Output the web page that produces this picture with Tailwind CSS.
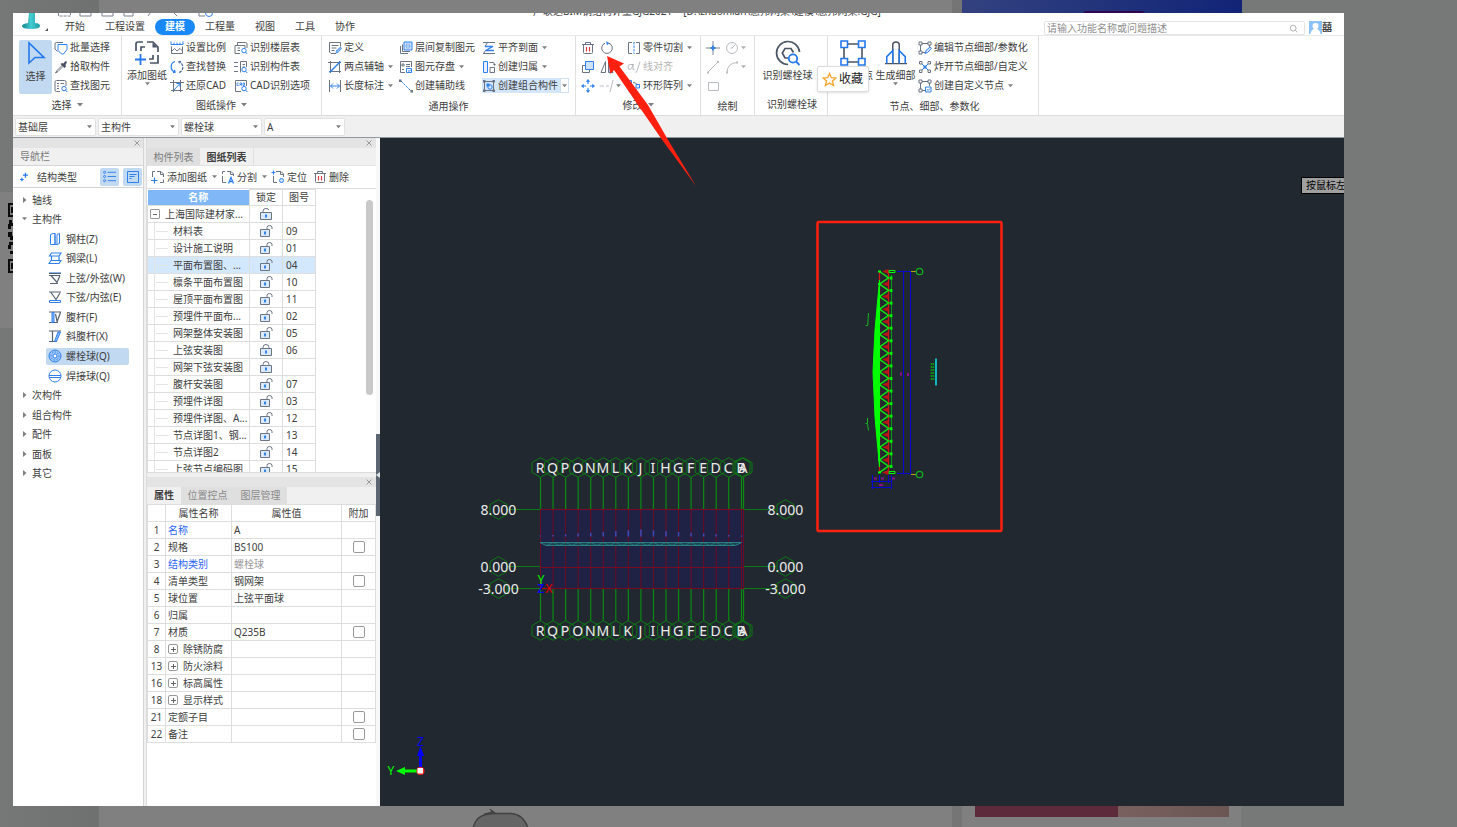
<!DOCTYPE html>
<html lang="zh-CN">
<head>
<meta charset="utf-8">
<meta name="viewport" content="width=device-width, initial-scale=1">
<title>广联达BIM钢结构计量GJG2021</title>
<script src="https://cdn.jsdelivr.net/npm/@tailwindcss/browser@4"></script>
</head>
<body class="relative h-screen overflow-hidden bg-[#777978] font-['Noto_Sans','Noto_Sans_CJK_SC',sans-serif] text-[10px] leading-[16px] text-[#404040]">

<!-- Icon library -->
<svg class="hidden" aria-hidden="true">
  <defs>
    <g id="lens"><circle cx="10" cy="9.6" r="2.2" fill="#fff" stroke="#2f80ed"/><path d="M11.6 11.2 13.3 13" stroke="#2f80ed"/></g>
    <g id="nodes" fill="none" stroke="#6b7482"><path d="M4 2.500h6M2.500 4v6M4 11.500h3M11.500 4v3"/><path d="M1 1h3v3H1zM10 1h3v3h-3zM1 10h3v3H1z" fill="#fff"/></g>
  </defs>
  <symbol id="i-cursor" viewBox="0 0 24 26"><path d="M5 2v20l6-5.500h9z" fill="none" stroke="#2378ea" stroke-width="1.600"/></symbol>
  <symbol id="i-batch" viewBox="0 0 14 14"><path d="M1 8V3Q1 1.500 2.500 1.500H9M1 8l2.500 2.500" fill="none" stroke="#6b7482"/><path d="M4 3.500h9v5L9.500 13H7.500L4 9.500z" fill="#fff" stroke="#2f80ed"/></symbol>
  <symbol id="i-pick" viewBox="0 0 14 14"><path d="M8.500 5 3 10.500 1.500 13 4 11.500l5.500-5.500" fill="none" stroke="#6b7482"/><path d="m8 3 1.500.5L11 1.500q1.500-.8 2 .5L11.500 5l.5 1.500L10.500 8 6.500 4z" fill="#465060"/></symbol>
  <symbol id="i-find" viewBox="0 0 14 14"><path d="M6 12.500H2.500Q1 12.500 1 11V3q0-1.500 1.500-1.500h8Q12 1.500 12 3v4M3 4.500h2M6.500 4.500H10M3 7h2M3 9.500h2" fill="none" stroke="#6b7482"/><use href="#lens"/></symbol>
  <symbol id="i-addsheet" viewBox="0 0 26 26"><path d="M2 11V4q0-2 2-2h5M13 2h6l5 5v5M24 15v8h-8M7 11V7h4M19 15v4h-4" fill="none" stroke="#4b5565" stroke-width="1.700"/><path d="M18.500 2.500v5h5z" fill="#4b5565"/><path d="M1 19.500h11M6.500 14v11" stroke="#2378ea" stroke-width="1.800"/></symbol>
  <symbol id="i-scale" viewBox="0 0 14 14"><path d="M1 .5v3h12v-3M4 1.500v2M7 1.500v2M10 1.500v2" fill="none" stroke="#2f80ed"/><path d="M1.500 5.500v7h11v-7M2 10l2.500-2.500L7 10l3-2.500 2.500 2.500" fill="none" stroke="#6b7482"/></symbol>
  <symbol id="i-replace" viewBox="0 0 14 14"><path d="M5 1.500C0 3 0 10 4.500 12M3 12.500l2-.3-.5-2.200" fill="none" stroke="#2f80ed" stroke-width="1.300"/><path d="M9 12.500c5-1.500 5-8.500.5-10.500M11 1.500l-2 .3.500 2.200" fill="none" stroke="#4a6fa8" stroke-width="1.300" stroke-dasharray="3 1"/></symbol>
  <symbol id="i-restore" viewBox="0 0 14 14"><path d="M0 3.500h14M3.500 1v12M10.500 1v12M1 11.500h12" stroke="#6b7482"/><path d="M3.500 11.500 10 4.500M6.500 4.500H10V8" fill="none" stroke="#2f80ed"/></symbol>
  <symbol id="i-floors" viewBox="0 0 14 14"><path d="M3.500 4V1.500h8q1.500 0 1.500 1.500v4M6 12.500H1V4.500h10V7M3.500 7H6M3.500 9.500H6" fill="none" stroke="#6b7482"/><use href="#lens"/></symbol>
  <symbol id="i-comps" viewBox="0 0 14 14"><path d="M0 2.500h4M0 6.500h4M0 11.500h4M6.500 12.500v-11h6V7M8.500 4.500H11M8.500 7H11" fill="none" stroke="#6b7482"/><use href="#lens"/></symbol>
  <symbol id="i-cad" viewBox="0 0 14 14"><path d="M7 12.500H1.500v-11h11V7" fill="none" stroke="#6b7482"/><path d="M4.800 4H3v2.500h1.800M6 6.700V4h1.500v2.700M6 5.500h1.500M9 4v2.500h1.500V4z" fill="none" stroke="#2f80ed" stroke-width=".8"/><use href="#lens"/></symbol>
  <symbol id="i-define" viewBox="0 0 14 14"><path d="M8 12.500H3l-1.500-1.500v-9.500h11v4M3.500 4.500h7M3.500 7h5M3.500 9.500h3" fill="none" stroke="#6b7482"/><path d="m8 12 .5-2.500L12.500 6l1 1.500L10 11.500z" fill="#8bb8f2" stroke="#2f80ed" stroke-width=".7"/></symbol>
  <symbol id="i-axis" viewBox="0 0 14 14"><path d="M2.500 1v12M11.500 1v12M0 2.500h13M1 11.500h12" stroke="#6b7482"/><path d="m1.500 12.500 11-11" stroke="#2f80ed" stroke-width="1.500"/></symbol>
  <symbol id="i-length" viewBox="0 0 14 14"><path d="M1.500 1v12M12.500 1v12" stroke="#6b7482"/><path d="M2.500 7h9M5 4.500 2.500 7 5 9.500M9 4.500 11.500 7 9 9.500" fill="none" stroke="#2f80ed"/></symbol>
  <symbol id="i-copylayer" viewBox="0 0 14 14"><path d="M1.500 5v7.500H9M3.500 3.500v7H11" fill="none" stroke="#6b7482"/><path d="M5 1h8v8H5z" fill="#cfe2fb" stroke="#2f80ed"/><path d="M7.500 3h3v4h-3zM5 5h8" fill="none" stroke="#8bb8f2"/></symbol>
  <symbol id="i-store" viewBox="0 0 14 14"><path d="M6 12.500H1.500v-11h11V7M3 4h2v2H3zM7 4.500h4M7 6.500h4M3 9.500h2" fill="none" stroke="#6b7482"/><path d="M7.500 8.500h5v4h-5zM9 10.500l1.200 1L12 9.500" fill="#fff" stroke="#2f80ed"/></symbol>
  <symbol id="i-aux" viewBox="0 0 14 14"><path d="m2 2 10 10" stroke="#2f80ed" stroke-dasharray="2.500 1"/><path d="M0 .5h2.500V3H0zM11.500 11H14v2.500h-2.500z" fill="#6b7482"/></symbol>
  <symbol id="i-flush" viewBox="0 0 14 14"><path d="M1 1.500h12M1 12.500h12M5.500 1.500 3 5.500M3.500 9.500l-2 3" fill="none" stroke="#6b7482"/><path d="M3 5.500h8L3.500 9.500H12" fill="none" stroke="#2f80ed" stroke-width="1.300"/></symbol>
  <symbol id="i-belong" viewBox="0 0 14 14"><path d="M1.500 1.500h4v11h-4z" fill="#e6f0fd" stroke="#2f80ed"/><path d="M8 7.500h4.500v5H8zM7.500 2.500H11q1.500 0 1.500 2.500" fill="none" stroke="#6b7482"/><path d="m11 4 1.500 2L14 4z" fill="#6b7482"/></symbol>
  <symbol id="i-combo" viewBox="0 0 14 14"><path d="M2.500 2.500h9v9h-9z" fill="none" stroke="#6b7482"/><path d="M1 1h2.500v2.500H1zM10.500 1H13v2.500h-2.500zM1 10.500h2.500V13H1zM10.500 10.500H13V13h-2.500z" fill="#6b7482"/><path d="M4.500 4.500h3v3h-3z" fill="#2f80ed"/><circle cx="8" cy="8" r="2.200" fill="none" stroke="#2f80ed"/></symbol>
  <symbol id="i-trash" viewBox="0 0 14 14"><path d="M1 3.500h12M4.500 3V1.500h5V3M2.500 3.500v8q0 1 1 1h7q1 0 1-1v-8" fill="none" stroke="#6b7482"/><path d="M5.500 6v4.500M8.500 6v4.500" stroke="#e0393e" stroke-width="1.200"/></symbol>
  <symbol id="i-rotate" viewBox="0 0 14 14"><path d="M9 2.200a5.300 5.300 0 1 1-4 0" fill="none" stroke="#6b7482"/><path d="m6 0 3.500 2.200L7 4.200z" fill="#2f80ed"/></symbol>
  <symbol id="i-cut" viewBox="0 0 14 14"><path d="M5 1.500H1.500v11H5M9 1.500h3.500v11H9" fill="none" stroke="#6b7482"/><path d="M7 1v12" stroke="#2f80ed" stroke-dasharray="2.500 1"/></symbol>
  <symbol id="i-copy" viewBox="0 0 14 14"><path d="M4.500 5.500h-3v7h7v-3" fill="none" stroke="#6b7482"/><path d="M4.500 1.500h8v8h-8z" fill="#cfe2fb" stroke="#2f80ed"/></symbol>
  <symbol id="i-mirror" viewBox="0 0 14 14"><path d="M5.500 1.500v11H1z" fill="none" stroke="#6b7482"/><path d="M8.500 1.500v11H13z" fill="#a9c9f5" stroke="#6b7482"/></symbol>
  <symbol id="i-align" viewBox="0 0 14 14"><path d="M7 4.500H3Q1 4.500 1 7t2 2.500q2 0 3-5v5h1.500M9.500 12.500l3.500-11M8 11.500v1" fill="none" stroke="#b8bcc2"/></symbol>
  <symbol id="i-move" viewBox="0 0 14 14"><path d="M7 2v3M7 9v3M2 7h3M9 7h3" stroke="#2f80ed" stroke-width="1.200"/><path d="M7 0 9.200 2.800H4.800zM7 14l2.200-2.800H4.800zM0 7l2.800-2.200v4.400zM14 7l-2.800-2.200v4.400z" fill="#2f80ed"/></symbol>
  <symbol id="i-extend" viewBox="0 0 14 14"><path d="M0 7h4M6 7h3M10 13l3-12" stroke="#b8bcc2"/></symbol>
  <symbol id="i-array" viewBox="0 0 14 14"><path d="M1 1.500h3.500V5H1zM9 5.500h3.500V9H9zM2 9h3.500v3.500H2z" fill="#e6f0fd" stroke="#2f80ed"/><path d="M6 3.500q3 0 4 2M9.500 10q-1 2-3.500 1.500" fill="none" stroke="#6b7482"/></symbol>
  <symbol id="i-point" viewBox="0 0 14 14"><path d="M0 7h5M9 7h5M7 0v5M7 9v5" stroke="#7c8794"/><path d="M4.500 7h5M7 4.500v5" stroke="#2f80ed" stroke-width="1.800"/></symbol>
  <symbol id="i-circle" viewBox="0 0 14 14"><circle cx="7" cy="7" r="5.500" fill="none" stroke="#b8bcc2"/><path d="m7 7 3.500-3.500M5.500 7h2" stroke="#b8bcc2"/></symbol>
  <symbol id="i-line" viewBox="0 0 14 14"><path d="m2 12 10-10" stroke="#b8bcc2"/><path d="M1 11.500h2v2H1zM11 1h2v2h-2z" fill="#b8bcc2"/></symbol>
  <symbol id="i-arc" viewBox="0 0 14 14"><path d="M2 13Q2 3 12 2.500" fill="none" stroke="#b8bcc2"/><path d="M1 11.500h2v2H1zM11 1.500h2v2h-2z" fill="#b8bcc2"/></symbol>
  <symbol id="i-rect" viewBox="0 0 14 14"><path d="M2.500 3.500h10v8h-10z" fill="none" stroke="#b8bcc2"/></symbol>
  <symbol id="i-bolt" viewBox="0 0 26 26"><path d="M13 24.500A11.500 11.500 0 1 1 24.500 12" fill="none" stroke="#4b5565" stroke-width="1.700"/><path d="M13 18h-3l-2.700-5L10 8.500h6l2.500 4" fill="none" stroke="#4b5565" stroke-width="1.700"/><circle cx="18" cy="18.500" r="4.200" fill="#fff" stroke="#2378ea" stroke-width="1.800"/><path d="m21 21.500 3.500 3.500" stroke="#2378ea" stroke-width="1.800"/></symbol>
  <symbol id="i-node" viewBox="0 0 26 26"><path d="M4 4h18v18H4z" fill="none" stroke="#4b5565" stroke-width="1.600"/><path d="M1 1h6.500v6.500H1zM18.500 1H25v6.500h-6.500zM1 18.500h6.500V25H1zM18.500 18.500H25V25h-6.500z" fill="#fff" stroke="#2378ea" stroke-width="1.600"/></symbol>
  <symbol id="i-detail" viewBox="0 0 26 26"><path d="M9.500 24V4q0-3 3.500-3t3.500 3v20M1 24.500h24" fill="none" stroke="#4b5565" stroke-width="1.600"/><path d="M3 24v-7l6.500-6.500V24M23 24v-7l-6.500-6.500V24" fill="none" stroke="#2378ea" stroke-width="1.700"/></symbol>
  <symbol id="i-nedit" viewBox="0 0 14 14"><use href="#nodes"/><path d="m7 12.500 1-3L12 6l1.500 1.500-4 4z" fill="#cfe2fb" stroke="#2f80ed"/></symbol>
  <symbol id="i-nexplode" viewBox="0 0 14 14"><path d="M1.500 4V1.500H4V4zM10 1.500h2.500V4H10zM1.500 10H4v2.500H1.500zM10 10h2.500v2.500H10z" fill="none" stroke="#6b7482"/><path d="m4 4 6 6M10 4l-6 6" stroke="#2f80ed"/><path d="M5.500 5.500h3v3h-3z" fill="#2f80ed"/></symbol>
  <symbol id="i-ncustom" viewBox="0 0 14 14"><use href="#nodes"/><path d="M7.500 8H13v5H7.500zM9 10.500l1.200 1L12 9.500" fill="#fff" stroke="#2f80ed"/></symbol>
  <symbol id="i-search" viewBox="0 0 14 14"><circle cx="6.500" cy="6.500" r="4.500" fill="none" stroke="#8c8c8c"/><path d="m10 10 3 3" stroke="#8c8c8c"/></symbol>
  <symbol id="i-spark" viewBox="0 0 14 14"><path d="M9 1v7M5.500 4.500h7M4 8v5M1.500 10.500h5" stroke="#2378ea" stroke-width="1.700"/></symbol>
  <symbol id="i-list" viewBox="0 0 14 14"><path d="M5 2.500h9M5 7h9M5 11.500h9" stroke="#2f80ed"/><g fill="none" stroke="#2f80ed"><circle cx="1.700" cy="2.500" r="1.100"/><circle cx="1.700" cy="7" r="1.100"/><circle cx="1.700" cy="11.500" r="1.100"/></g></symbol>
  <symbol id="i-doc" viewBox="0 0 14 14"><path d="M1.500 1.500h11v11h-11zM3.500 4.500h7M3.500 6.500h5M3.500 8.500h2" fill="none" stroke="#2f80ed"/></symbol>
  <symbol id="i-col" viewBox="0 0 14 14"><path d="M2.500 2.500 5 1.500h2v11H2.500zM7 1.500v11h2l2.500-1v-10L9 2.500v10" fill="none" stroke="#2f80ed"/></symbol>
  <symbol id="i-beam" viewBox="0 0 14 14"><path d="M3.500 2H13l-2 3H1.500zM3.500 5v4.500M11 5v4.500M3 9.500h10l-2 3H1z" fill="none" stroke="#2f80ed" stroke-width="1.200"/></symbol>
  <symbol id="i-top" viewBox="0 0 14 14"><path d="M1 2.500h12M1 4.500h11M3 4.500l6 7 3-7M2 12.500h8" fill="none" stroke="#56606f" stroke-width="1.200"/><path d="M1 1.500h12" stroke="#8bb8f2"/></symbol>
  <symbol id="i-bottom" viewBox="0 0 14 14"><path d="M1 2h12M3 2.500l5 7L12 3" fill="none" stroke="#56606f" stroke-width="1.200"/><path d="M1.500 10.500h11v2h-11z" fill="#fff" stroke="#2f80ed"/></symbol>
  <symbol id="i-web" viewBox="0 0 14 14"><path d="M1 2h12M1 12.500h9M12.500 2.500 9 12M7.500 4 9 11" fill="none" stroke="#56606f" stroke-width="1.200"/><path d="M4 2.500h2v10H4z" fill="#8bb8f2" stroke="#2f80ed"/></symbol>
  <symbol id="i-diag" viewBox="0 0 14 14"><path d="M1 2h12M1 12.500h8M4.500 2.500v10" fill="none" stroke="#56606f" stroke-width="1.200"/><path d="m12.500 3-4 9.500H6.500L10 3z" fill="#8bb8f2" stroke="#2f80ed"/></symbol>
  <symbol id="i-bball" viewBox="0 0 14 14"><circle cx="7" cy="7" r="6" fill="#9cc3f7" stroke="#2f80ed"/><circle cx="7" cy="7" r="4" fill="none" stroke="#2f80ed" stroke-dasharray="1.500 1.500"/><circle cx="7" cy="7" r="2" fill="#fff" stroke="#2f80ed"/></symbol>
  <symbol id="i-wball" viewBox="0 0 14 14"><circle cx="7" cy="7" r="6" fill="none" stroke="#2f80ed"/><path d="M1 6.500h12M1 8.500h12" stroke="#2f80ed"/></symbol>
  <symbol id="i-sheet" viewBox="0 0 14 14"><path d="M1.500 7V1.500H4M6 1.500h4L12.500 4v3M12.500 9.500v3H9M9.500 1.500v3h3" fill="none" stroke="#6b7482"/><path d="M0 10.500h6.500M3.500 7.500v6" stroke="#2f80ed" stroke-width="1.200"/></symbol>
  <symbol id="i-split" viewBox="0 0 14 14"><path d="M1.500 4V1.500H4M6 1.500h4L12.500 4v2M1.500 6v6.500H5M9.500 1.500v3h3" fill="none" stroke="#6b7482"/><path d="m7.500 13.500 2.500-6 2.500 6M8.500 11.500h3" fill="none" stroke="#2f80ed" stroke-width="1.300"/></symbol>
  <symbol id="i-locate" viewBox="0 0 14 14"><path d="M5 1.500h5L12.500 4v3M2.500 6v6.500H6M9.500 1.500v3h3" fill="none" stroke="#6b7482"/><path d="M.5 2.500h4M2.500.5v4" stroke="#2f80ed"/><circle cx="10.500" cy="10.500" r="2" fill="#cfe2fb" stroke="#2f80ed"/></symbol>
  <symbol id="i-open" viewBox="0 0 14 14"><path d="M1.500 5.500h9v7h-9z" fill="#dbe9fd" stroke="#6b7482"/><path d="M8 5V3.500Q8 1.500 10.500 1.500t2.500 2V5" fill="none" stroke="#6b7482"/><path d="M6 7.500v3" stroke="#2378ea" stroke-width="1.800"/></symbol>
  <symbol id="i-openc" viewBox="0 0 14 14"><path d="M1.500 5.500h11v7h-11z" fill="#dbe9fd" stroke="#6b7482"/><path d="M4 5.500V4Q4 1.500 7 1.500q2.500 0 3 1.500" fill="none" stroke="#6b7482"/><path d="M7 7.500v3" stroke="#2378ea" stroke-width="1.800"/></symbol>
  <symbol id="i-lock" viewBox="0 0 14 14"><path d="M1.500 5.500h11v7h-11z" fill="#dbe9fd" stroke="#6b7482"/><path d="M4 5.500V4.500Q4 1.500 7 1.500t3 3v1" fill="none" stroke="#6b7482"/><path d="M7 7.500v3" stroke="#2378ea" stroke-width="1.800"/></symbol>
  <symbol id="i-down" viewBox="0 0 6 4"><path d="M0 0h6L3 3.500z" fill="#808080"/></symbol>
  <symbol id="i-right" viewBox="0 0 4 6"><path d="M0 0v6l3.500-3z" fill="#808080"/></symbol>
  <symbol id="i-x" viewBox="0 0 8 8"><path d="m1.500 1.500 5 5M6.500 1.500l-5 5" stroke="#9a9a9a"/></symbol>
</svg>

<!-- Dimmed page behind the viewer -->
<div class="absolute inset-0" aria-hidden="true">
  <div class="absolute inset-y-0 left-0 w-[99px] bg-linear-to-r from-[#757877] to-[#6f7170]"></div>
  <div class="absolute inset-y-0 left-[99px] w-[853px] bg-[#808080]"></div>
  <div class="absolute inset-y-0 left-[952px] w-[10px] bg-[#757575]"></div>
  <div class="absolute left-[962px] top-0 h-[100px] w-[280px] bg-linear-to-r from-[#33417f] to-[#122377]"></div>
  <div class="absolute left-[1082px] top-[11px] h-[10px] w-[64px] rounded-full bg-[#30064e]"></div>
  <div class="absolute bottom-0 left-[962px] h-[100px] w-[279px] bg-[#808080]"></div>
  <div class="absolute bottom-[10px] left-[975px] h-[40px] w-[143px] bg-[#5c2a3b]"></div>
  <div class="absolute bottom-[10px] left-[1118px] h-[40px] w-[111px] bg-linear-to-r from-[#78605e] to-[#6b5654]"></div>
  <div class="absolute left-0 top-[192px] h-[136px] w-[13px] bg-[#808080]"></div>
  <svg class="absolute left-[8px] top-[203px]" width="6" height="70" viewBox="0 0 6 70"><path d="M0 0h6v2H2v10h4v2H0zM3 4h3v6H3zM1 17h3v3h2v3H3v3H0v-5h1zM0 29h4v4h2v4H2v-3H0zM1 39h5v3H3v4H0v-4h1zM2 48h3v3H2zM0 56h6v2H2v10h4v2H0zM3 60h3v6H3z" fill="#0c0c0c"/></svg>
  <svg class="absolute left-[472px] top-[808px]" width="58" height="19" viewBox="0 0 58 19"><path d="M1 20C4 9 10 5.500 25 5.500h14C47 6 53 11 56 20z" fill="#656565" stroke="#424242" stroke-width="1.500"/><path d="M12 6 20 4 18 1l6 4.500" fill="#424242" stroke="#424242"/></svg>
</div>

<div class="relative h-full pb-[21px] pl-[13px] pr-[113px] pt-[13px]">
<main class="relative flex h-full flex-col overflow-hidden bg-white">

  <!-- Title and menu -->
  <header class="relative shrink-0 border-b border-[#e9e9e9]">
    <div class="flex h-[4px] items-end gap-[10px] overflow-hidden pl-[45px] leading-[12px]">
      <svg class="shrink-0" width="160" height="13" viewBox="0 0 160 13" fill="none" stroke="#7c8490"><path d="M.500 1v11h12V1" stroke-dasharray="3 1"/><path d="M22 1v11h11V1M44 1v11h11V1H44M64 8h13M66 8v4h9V8M90 12l3-4M116 9l3 3M141 1v11h6"/><circle cx="151" cy="9" r="3.500" stroke="#2f80ed"/></svg>
      <h1 class="ml-[305px] whitespace-nowrap">广联达BIM钢结构计量GJG2021 - &nbsp;[D:\zhaomian\惠邦网架\建模\惠邦网架.GJG]</h1>
    </div>
    <svg class="absolute left-[9px] top-0" width="26" height="19" viewBox="0 0 26 19"><defs><linearGradient id="lg"><stop stop-color="#12848c"/><stop offset=".5" stop-color="#45cdd2"/><stop offset="1" stop-color="#1a9aa2"/></linearGradient></defs><path d="M7 0h6v10q5 0 5 3 0 3-9 3t-9-3q0-2 6-3z" fill="url(#lg)"/><path d="M26 15v3h-3z" fill="#555"/></svg>
    <div class="flex h-[18px] items-end">
      <nav class="ml-[42px] flex h-[16px] leading-[15px] [&>a]:px-[10px]">
        <a href="#">开始</a><a href="#">工程设置</a><a href="#" class="rounded-full bg-[#1989fa] font-bold text-white">建模</a><a href="#">工程量</a><a href="#">视图</a><a href="#">工具</a><a href="#">协作</a>
      </nav>
      <form class="ml-auto flex h-[14px] w-[261px] items-center rounded-[2px] border border-[#e4e4e4] pl-[2px] pr-[6px]">
        <input type="search" aria-label="搜索功能" placeholder="请输入功能名称或问题描述" class="h-[12px] min-w-0 flex-1 leading-[12px] outline-none placeholder:text-[#8f8f8f]">
        <svg width="9" height="9"><use href="#i-search"/></svg>
      </form>
      <div class="ml-[4px] mr-[12px] flex h-[16px] items-center">
        <svg width="13" height="13" viewBox="0 0 13 13"><path d="M0 0h13v13H0z" fill="#8cc3fa"/><path d="M6.500 2q3 0 3 3 0 2-1.500 3 3 1 3.500 5h-10q.500-4 3.500-5-1.500-1-1.500-3 0-3 3-3" fill="#fff"/></svg>
        <span class="font-bold">囍</span>
      </div>
    </div>
  </header>

  <!-- Ribbon -->
  <section id="ribbon" class="flex h-[80px] shrink-0 whitespace-nowrap border-b border-[#dcdcdc] leading-[19px] [&>div]:flex [&>div]:shrink-0 [&>div]:flex-col [&>div]:border-r [&>div]:border-[#e0e0e0] [&>div]:pt-[2px] [&_.col]:flex [&_.col]:shrink-0 [&_.col]:flex-col [&_.col>button]:flex [&_.col>button]:h-[19px] [&_.col>button]:items-center [&_.col>button]:gap-[2px] [&_p]:flex [&_p]:items-center [&_p]:justify-center [&_p]:gap-[5px]">
    <div class="w-[109px]">
      <div class="flex h-[57px] pl-[6px]">
        <button class="mt-[2px] flex h-[54px] w-[33px] flex-col items-center rounded-[2px] bg-[#c2d9f2] leading-[14px]"><svg class="mb-[2px] mt-[1px]" width="24" height="26"><use href="#i-cursor"/></svg>选择</button>
        <div class="col ml-[2px]">
          <button><svg width="14" height="14"><use href="#i-batch"/></svg>批量选择</button>
          <button><svg width="14" height="14"><use href="#i-pick"/></svg>拾取构件</button>
          <button><svg width="14" height="14"><use href="#i-find"/></svg>查找图元</button>
        </div>
      </div>
      <p class="leading-[20px]">选择<svg width="6" height="4"><use href="#i-down"/></svg></p>
    </div>
    <div class="w-[200px]">
      <div class="flex h-[57px] pl-[4px]">
        <button class="mt-[2px] flex w-[42px] flex-col items-center leading-[14px]"><svg class="mb-[2px]" width="26" height="26"><use href="#i-addsheet"/></svg>添加图纸<svg width="5" height="4"><use href="#i-down"/></svg></button>
        <div class="col ml-[2px] w-[64px]">
          <button><svg width="14" height="14"><use href="#i-scale"/></svg>设置比例</button>
          <button><svg width="14" height="14"><use href="#i-replace"/></svg>查找替换</button>
          <button><svg width="14" height="14"><use href="#i-restore"/></svg>还原CAD</button>
        </div>
        <div class="col">
          <button><svg width="14" height="14"><use href="#i-floors"/></svg>识别楼层表</button>
          <button><svg width="14" height="14"><use href="#i-comps"/></svg>识别构件表</button>
          <button><svg width="14" height="14"><use href="#i-cad"/></svg>CAD识别选项</button>
        </div>
      </div>
      <p class="leading-[20px]">图纸操作<svg width="6" height="4"><use href="#i-down"/></svg></p>
    </div>
    <div class="w-[254px]">
      <div class="flex h-[57px] pl-[6px]">
        <div class="col w-[71px]">
          <button><svg width="14" height="14"><use href="#i-define"/></svg>定义</button>
          <button><svg width="14" height="14"><use href="#i-axis"/></svg>两点辅轴<svg class="ml-[2px]" width="5" height="4"><use href="#i-down"/></svg></button>
          <button><svg width="14" height="14"><use href="#i-length"/></svg>长度标注<svg class="ml-[2px]" width="5" height="4"><use href="#i-down"/></svg></button>
        </div>
        <div class="col w-[83px]">
          <button><svg width="14" height="14"><use href="#i-copylayer"/></svg>层间复制图元</button>
          <button><svg width="14" height="14"><use href="#i-store"/></svg>图元存盘<svg class="ml-[2px]" width="5" height="4"><use href="#i-down"/></svg></button>
          <button><svg width="14" height="14"><use href="#i-aux"/></svg>创建辅助线</button>
        </div>
        <div class="col">
          <button><svg width="14" height="14"><use href="#i-flush"/></svg>平齐到面<svg class="ml-[2px]" width="5" height="4"><use href="#i-down"/></svg></button>
          <button><svg width="14" height="14"><use href="#i-belong"/></svg>创建归属<svg class="ml-[2px]" width="5" height="4"><use href="#i-down"/></svg></button>
          <button><span class="flex h-[15px] items-center gap-[2px] bg-[#d3e6fc] pr-[2px]"><svg width="14" height="14"><use href="#i-combo"/></svg>创建组合构件</span><span class="-ml-[2px] flex h-[15px] w-[9px] items-center justify-center border border-[#cfe0f5]"><svg width="5" height="4"><use href="#i-down"/></svg></span></button>
        </div>
      </div>
      <p class="leading-[22px]">通用操作</p>
    </div>
    <div class="w-[125px]">
      <div class="flex h-[57px] pl-[5px]">
        <div class="col w-[19px]">
          <button aria-label="删除"><svg width="14" height="14"><use href="#i-trash"/></svg></button>
          <button aria-label="复制"><svg width="14" height="14"><use href="#i-copy"/></svg></button>
          <button aria-label="移动"><svg width="14" height="14"><use href="#i-move"/></svg></button>
        </div>
        <div class="col w-[27px]">
          <button aria-label="旋转"><svg width="14" height="14"><use href="#i-rotate"/></svg></button>
          <button aria-label="镜像"><svg width="14" height="14"><use href="#i-mirror"/></svg></button>
          <button aria-label="延伸"><svg width="14" height="14"><use href="#i-extend"/></svg><svg width="5" height="4"><use href="#i-down"/></svg></button>
        </div>
        <div class="col">
          <button><svg width="14" height="14"><use href="#i-cut"/></svg>零件切割<svg class="ml-[2px]" width="5" height="4"><use href="#i-down"/></svg></button>
          <button class="text-[#b4b4b4]" disabled><svg width="14" height="14"><use href="#i-align"/></svg>线对齐</button>
          <button><svg width="14" height="14"><use href="#i-array"/></svg>环形阵列<svg class="ml-[2px]" width="5" height="4"><use href="#i-down"/></svg></button>
        </div>
      </div>
      <p class="leading-[20px]">修改<svg width="6" height="4"><use href="#i-down"/></svg></p>
    </div>
    <div class="w-[54px]">
      <div class="flex h-[57px] pl-[5px]">
        <div class="col w-[19px]">
          <button aria-label="点"><svg width="14" height="14"><use href="#i-point"/></svg></button>
          <button aria-label="直线" disabled><svg width="14" height="14"><use href="#i-line"/></svg></button>
          <button aria-label="矩形" disabled><svg width="14" height="14"><use href="#i-rect"/></svg></button>
        </div>
        <div class="col">
          <button aria-label="圆" disabled><svg width="14" height="14"><use href="#i-circle"/></svg><svg class="opacity-60" width="5" height="4"><use href="#i-down"/></svg></button>
          <button aria-label="弧" disabled><svg width="14" height="14"><use href="#i-arc"/></svg><svg class="opacity-60" width="5" height="4"><use href="#i-down"/></svg></button>
        </div>
      </div>
      <p class="leading-[22px]">绘制</p>
    </div>
    <div class="w-[73px]">
      <div class="flex h-[57px] justify-center pr-[7px]">
        <button class="mt-[2px] flex flex-col items-center leading-[14px]"><svg class="mb-[2px]" width="26" height="26"><use href="#i-bolt"/></svg>识别螺栓球</button>
      </div>
      <p class="pl-[2px] leading-[22px]">识别螺栓球</p>
    </div>
    <div class="w-[211px]">
      <div class="flex h-[57px] pl-[4px]">
        <button class="mt-[2px] flex w-[42px] flex-col items-center leading-[14px]"><svg class="mb-[2px]" width="26" height="26"><use href="#i-node"/></svg>生成节点</button>
        <button class="mt-[2px] flex w-[43px] flex-col items-center leading-[14px]"><svg class="mb-[2px]" width="24" height="26"><use href="#i-detail"/></svg>生成细部<svg width="5" height="4"><use href="#i-down"/></svg></button>
        <div class="col ml-[1px]">
          <button><svg width="14" height="14"><use href="#i-nedit"/></svg>编辑节点细部/参数化</button>
          <button><svg width="14" height="14"><use href="#i-nexplode"/></svg>炸开节点细部/自定义</button>
          <button><svg width="14" height="14"><use href="#i-ncustom"/></svg>创建自定义节点<svg class="ml-[2px]" width="5" height="4"><use href="#i-down"/></svg></button>
        </div>
      </div>
      <p class="pl-[3px] leading-[22px]">节点、细部、参数化</p>
    </div>
  </section>

  <!-- Context selectors -->
  <div class="flex h-[22px] shrink-0 items-center gap-[2px] border-b border-[#8f989f] bg-[#f0f0f0] pl-[2px] [&>label]:relative [&>label]:w-[81px] [&_select]:h-[18px] [&_select]:w-full [&_select]:appearance-none [&_select]:rounded-[2px] [&_select]:border [&_select]:border-[#e2e2e2] [&_select]:bg-white [&_select]:px-[2px] [&_select]:leading-[16px] [&_svg]:absolute [&_svg]:right-[4px] [&_svg]:top-[7px]">
    <label><select aria-label="楼层"><option>基础层</option></select><svg width="5" height="4"><use href="#i-down"/></svg></label>
    <label><select aria-label="构件大类"><option>主构件</option></select><svg width="5" height="4"><use href="#i-down"/></svg></label>
    <label><select aria-label="构件类型"><option>螺栓球</option></select><svg width="5" height="4"><use href="#i-down"/></svg></label>
    <label><select aria-label="构件"><option>A</option></select><svg width="5" height="4"><use href="#i-down"/></svg></label>
  </div>

  <div class="flex min-h-0 flex-1 bg-[#f0f0f0]">
    <!-- Navigation -->
    <aside class="flex w-[131px] shrink-0 flex-col border-r border-[#d4d4d4] bg-white">
      <div class="flex h-[10px] items-center justify-end bg-[#e4e4e4] pr-[2px]"><button aria-label="关闭"><svg class="block" width="8" height="8"><use href="#i-x"/></svg></button></div>
      <h2 class="h-[17px] bg-[#f0f0f0] pl-[7px] text-[#7c7c7c]">导航栏</h2>
      <div class="flex h-[23px] items-center border-y border-[#d4d4d4] pl-[6px] pr-[1px]">
        <svg width="10" height="10"><use href="#i-spark"/></svg><span class="ml-[8px] flex-1">结构类型</span>
        <button aria-label="列表视图" class="mr-[4px] flex h-[18px] w-[19px] items-center justify-center rounded-[2px] bg-[#c2d9f2]"><svg width="13" height="13"><use href="#i-list"/></svg></button>
        <button aria-label="详情视图" class="flex h-[18px] w-[19px] items-center justify-center rounded-[2px] bg-[#c2d9f2]"><svg width="14" height="14"><use href="#i-doc"/></svg></button>
      </div>
      <ul id="tree" class="mt-[2px] grid h-[293px] auto-rows-fr"></ul>
    </aside>

    <!-- Drawings and properties -->
    <div class="ml-[2px] flex w-[230px] shrink-0 flex-col border-l border-[#dcdcdc]">
      <section class="flex h-[335px] flex-col border-b border-[#dcdcdc] bg-white">
        <div class="flex h-[10px] shrink-0 items-center justify-end bg-[#e4e4e4] pr-[3px]"><button aria-label="关闭"><svg class="block" width="8" height="8"><use href="#i-x"/></svg></button></div>
        <div class="flex h-[18px] shrink-0 border-b border-[#e2e2e2] bg-[#f0f0f0] leading-[18px]"><button class="w-[53px] bg-[#dfdfdf] text-[#7c7c7c]">构件列表</button><button class="w-[54px] border-r border-[#e0e0e0] bg-[#f0f0f0] font-bold">图纸列表</button></div>
        <div class="flex h-[22px] shrink-0 items-center gap-[4px] pl-[4px] [&>button]:flex [&>button]:items-center [&>button]:gap-[2px]">
          <button><svg width="14" height="14"><use href="#i-sheet"/></svg>添加图纸<svg class="ml-[3px]" width="5" height="4"><use href="#i-down"/></svg></button>
          <button><svg width="14" height="14"><use href="#i-split"/></svg>分割<svg class="ml-[3px]" width="5" height="4"><use href="#i-down"/></svg></button>
          <button><svg width="14" height="14"><use href="#i-locate"/></svg>定位</button>
          <button class="ml-[2px]"><svg width="14" height="14"><use href="#i-trash"/></svg>删除</button>
        </div>
        <div class="flex min-h-0 flex-1 justify-between overflow-hidden border-t border-[#dcdcdc] pr-[3px]">
          <table class="h-max w-[169px] table-fixed border-collapse [&_td]:h-[17px] [&_td]:border [&_td]:border-[#dedede] [&_td]:p-0 [&_td]:leading-[16px]">
            <colgroup><col class="w-[102px]"><col class="w-[33px]"><col class="w-[33px]"></colgroup>
            <thead><tr class="h-[16px] leading-[15px]"><th class="bg-[#7fb7f7] p-0 text-white">名称</th><th class="border border-[#dedede] p-0 font-normal">锁定</th><th class="border border-[#dedede] p-0 font-normal">图号</th></tr></thead>
            <tbody id="sheets"></tbody>
          </table>
          <div class="mt-[11px] h-[195px] w-[7px] rounded-full bg-[#c9c9c9]"></div>
        </div>
      </section>
      <section class="mt-[4px] flex flex-1 flex-col bg-white">
        <div class="flex h-[10px] shrink-0 items-center justify-end bg-[#e4e4e4] pr-[3px]"><button aria-label="关闭"><svg class="block" width="8" height="8"><use href="#i-x"/></svg></button></div>
        <div class="flex h-[17px] shrink-0 bg-[#f0f0f0] leading-[17px]"><button class="w-[34px] font-bold">属性</button><button class="w-[53px] bg-[#dfdfdf] text-[#8a8a8a]">位置控点</button><button class="w-[53px] bg-[#dfdfdf] text-[#8a8a8a]">图层管理</button></div>
        <table class="w-[228px] table-fixed border-collapse [&_td]:h-[17px] [&_td]:border [&_td]:border-[#dedede] [&_td]:py-0 [&_td]:leading-[16px] [&_th]:h-[17px] [&_th]:border [&_th]:border-[#dedede] [&_th]:p-0 [&_th]:font-normal [&_th]:leading-[16px]">
          <colgroup><col class="w-[18px]"><col class="w-[66px]"><col class="w-[110px]"><col class="w-[34px]"></colgroup>
          <thead><tr><th></th><th>属性名称</th><th>属性值</th><th>附加</th></tr></thead>
          <tbody id="props"></tbody>
        </table>
      </section>
    </div>

    <div class="w-[4px] shrink-0 bg-[#f8f8f8] pt-[296px]"><button aria-label="收起面板" class="flex h-[82px] w-[4px] items-center bg-[#5b6672]"><svg width="4" height="6" viewBox="0 0 4 6"><path d="M4 0v6L0 3z" fill="#dfe3e8"/></svg></button></div>

    <!-- Model canvas -->
    <section class="relative min-w-0 flex-1 overflow-hidden bg-[#222830]">
      <svg class="block h-full w-full" viewBox="380 138 964 668" preserveAspectRatio="xMinYMin meet" font-family="'Noto Sans'" font-size="14" text-anchor="middle">
        <g id="plan"></g>
        <g id="truss"></g>
        <g font-size="12" font-weight="500"><path d="M541 588.500h6" stroke="#c00000"/><text x="541" y="593" fill="#0000ff">Z</text><text x="541" y="584" fill="#00e000">Y</text><text x="549" y="592.500" fill="#d40000">X</text></g>
        <path d="M420.500 770v-16" stroke="#0000ff" stroke-width="3"/><path d="m420.500 746 3.500 10h-7z" fill="#0000ff"/>
        <path d="M419 771h-16" stroke="#00ff00" stroke-width="3"/><path d="m396 771 9-4v8z" fill="#00ff00"/>
        <circle cx="420.500" cy="771" r="4" fill="#ff1a1a"/><path d="M417.500 768h5.500v5.500h-5.500z" fill="#f2f2f2"/>
        <text x="391" y="775" font-size="12" fill="#00ff00">Y</text><text x="420.500" y="746" font-size="12" fill="#0000ff">Z</text>
        <rect x="817.500" y="222" width="184" height="309" rx="1" fill="none" stroke="#ff2010" stroke-width="2.500"/>
      </svg>
      <div class="absolute left-[921px] top-[39px] h-[17px] w-[120px] overflow-hidden border border-black bg-[#a0a0a0] pl-[4px] leading-[15px] text-black">按鼠标左键</div>
    </section>
  </div>

  <!-- Favourite popup and pointer annotation -->
  <button class="absolute left-[804px] top-[53px] flex h-[26px] w-[52px] items-center gap-[2px] rounded-[2px] border border-[#dcdcdc] bg-white pl-[4px] text-[12px] text-[#222] shadow-sm"><svg width="15" height="15" viewBox="0 0 15 15"><path d="m7.500 1.500 1.800 4.200 4.700.3-3.600 3 1.200 4.500-4.100-2.400-4.100 2.400L4.600 9 1 6l4.700-.3z" fill="#fff" stroke="#f7a52b" stroke-width="1.300"/></svg>收藏</button>
  <svg class="absolute left-[593px] top-[41px]" width="92" height="134" viewBox="606 53 92 134"><path d="M607 55 624 62.500 619.500 65.500 648 104 667.500 138 696 185 661.500 138 638 104 614 69 610.500 73z" fill="#ff2010"/></svg>
</main>
</div>

<script>
const use = (id, s = 14, c = 'block shrink-0') => `<svg class="${c}" width="${s}" height="${s}"><use href="#i-${id}"/></svg>`;

const tree = [['r','轴线'],['d','主构件'],['col','钢柱(Z)'],['beam','钢梁(L)'],['top','上弦/外弦(W)'],['bottom','下弦/内弦(E)'],['web','腹杆(F)'],['diag','斜腹杆(X)'],['bball','螺栓球(Q)'],['wball','焊接球(Q)'],['r','次构件'],['r','组合构件'],['r','配件'],['r','面板'],['r','其它']];
document.getElementById('tree').innerHTML = tree.map(([k, t]) => {
  if (k === 'r') return `<li class="flex items-center pl-[10px]"><svg class="mr-[5px]" width="4" height="6"><use href="#i-right"/></svg>${t}</li>`;
  if (k === 'd') return `<li class="flex items-center pl-[9px]"><svg class="mr-[5px]" width="5" height="4"><use href="#i-down"/></svg>${t}</li>`;
  return `<li class="flex items-center pl-[33px]"><a href="#" class="${k === 'bball' ? 'flex h-[17px] w-[83px] items-center gap-[4px] rounded-[2px] bg-[#c2d9f2] pl-[2px]' : 'flex items-center gap-[4px] pl-[2px]'}">${use(k)}${t}</a></li>`;
}).join('');

const sheets = [['材料表','09'],['设计施工说明','01'],['平面布置图、...','04'],['檩条平面布置图','10'],['屋顶平面布置图','11'],['预埋件平面布...','02'],['网架整体安装图','05'],['上弦安装图','06',1],['网架下弦安装图','',1],['腹杆安装图','07'],['预埋件详图','03'],['预埋件详图、A...','12'],['节点详图1、钢...','13'],['节点详图2','14'],['上弦节点编码图','15']];
document.getElementById('sheets').innerHTML =
  `<tr><td><div class="flex h-[16px] items-center whitespace-nowrap"><button aria-label="折叠" class="ml-[2px] mr-[5px] flex h-[10px] w-[10px] items-center justify-center rounded-[1px] border border-[#999]"><span class="block h-px w-[4px] bg-[#666]"></span></button>上海国际建材家...</div></td><td>${use('openc', 14, 'mx-auto block')}</td><td></td></tr>` +
  sheets.map(([n, no, locked], i) => `<tr class="${i === 2 ? 'bg-[#d4e8fd]' : ''}"><td><div class="flex h-[16px] items-center overflow-hidden whitespace-nowrap"><span class="ml-[6px] h-full border-l border-[#e4e4e4]"></span><span class="ml-[1px] mr-[5px] w-[12px] border-t border-[#e4e4e4]"></span>${n}</div></td><td>${use(locked ? 'lock' : 'open', 14, 'mx-auto block')}</td><td><div class="pl-[3px]">${no}</div></td></tr>`).join('');

const props = [[1,'名称','A','b'],[2,'规格','BS100','c'],[3,'结构类别','螺栓球','bg'],[4,'清单类型','钢网架','c'],[5,'球位置','上弦平面球',''],[6,'归属','',''],[7,'材质','Q235B','c'],[8,'除锈防腐','','+'],[13,'防火涂料','','+'],[16,'标高属性','','+'],[18,'显示样式','','+'],[21,'定额子目','','c'],[22,'备注','','c']];
document.getElementById('props').innerHTML = props.map(([n, k, v, f]) => `<tr>
  <td class="px-0 text-center">${n}</td>
  <td class="px-[2px]">${f === '+' ? `<div class="flex items-center"><button aria-label="展开${k}" class="mr-[5px] flex h-[10px] w-[10px] items-center justify-center rounded-[2px] border border-[#999]"><svg width="5" height="5" viewBox="0 0 5 5"><path d="M0 2.500h5M2.500 0v5" stroke="#666"/></svg></button>${k}</div>` : `<span class="${f.includes('b') ? 'text-[#2a63f6]' : ''}">${k}</span>`}</td>
  <td class="px-[2px]"><span class="${f === 'bg' ? 'text-[#999]' : ''}">${v}</span></td>
  <td class="px-0">${f === 'c' ? `<input type="checkbox" aria-label="附加${k}" class="mx-auto block h-[12px] w-[12px] appearance-none rounded-[2px] border border-[#999] bg-white">` : ''}</td></tr>`).join('');

/* Axis grid plan */
const hex = (x, y) => `<path d="M${x} ${y - 9.8}l8.500 4.900v9.800l-8.500 4.900l-8.500-4.900v-9.800z" fill="none" stroke="#0b7a12"/>`;
const names = 'RQPONMLKJIHGFEDCBA'.split('');
const xs = names.map((_, i) => i < 16 ? 540.5 + i * 12.55 : i === 16 ? 741.5 : 743.5);
let p = '<path d="M540.500 509.500h203.500v79h-203.500z" fill="#1f2244"/>';
xs.forEach((x, i) => {
  p += `<path d="M${x} 477V509M${x} 589V621" stroke="#0a8a10" stroke-width="1.200"/><path d="M${x} 509.500V588.500" stroke="#6e0a24"/>`;
  if (i < 17) { const h = Math.max(1, 7 - Math.abs(i - 8) * 0.8); p += `<path d="M${x} ${536.5 - h}v${h}" stroke="#3f49b8" stroke-width="1.500"/>`; }
  [467.500, 630.500].forEach(y => { p += hex(x, y); });
});
p += '<path d="M540.500 509.500h203.500M540.500 567.500h203.500M540.500 588.500h203.500" stroke="#7a0a22" fill="none"/>';
p += '<path d="M540 542.500h201.500l-6 3h-189.500z" fill="#1d4350" stroke="#277f85"/>';
let z = 'M546.800 545.500'; for (let i = 0; i < 30; i++) z += `L${546.8 + (i + 1) * 6.27} ${i % 2 ? 545.5 : 542.5}`;
p += `<path d="${z}" fill="none" stroke="#2f8a80" stroke-width=".6"/>`;
[[509.5, '8.000'], [566.5, '0.000'], [588.5, '-3.000']].forEach(([y, t]) => {
  p += `<path d="M508 ${y}h32M744 ${y}h32" stroke="#0b7a12"/>`;
  [498.500, 785.500].forEach(x => { p += hex(x, y) + `<text x="${x}" y="${y + 5}" fill="#ececec">${t}</text>`; });
});
xs.forEach((x, i) => [472.500, 635.500].forEach(y => { p += `<text x="${x - 0.5}" y="${y}" fill="#ececec">${names[i]}</text>`; }));
document.getElementById('plan').innerHTML = p;

/* Rotated truss elevation */
let t = '<path d="M879.500 271.500v201M888.500 271.500v201" stroke="#d01818" stroke-width="1.300" fill="none"/>';
t += '<path d="M879.500 280 875 330l-2 42 2 45 4.500 50z" fill="#00ff00" stroke="#00ff00"/><path d="M891.500 275v193" stroke="#0c9a14"/>';
for (let i = 0; i <= 16; i++) {
  const y = 271.5 + i * 12.56;
  if (i < 16) t += `<path d="M879.500 ${y}l9 6.280l-9 6.280" fill="none" stroke="#12e012" stroke-width="1.500"/><path d="M889.500 ${y + 5}h3v3h-3z" fill="#00ee00"/>`;
  t += `<path d="M882 ${y}l6.500-2.500v5z" fill="#b81414"/><path d="M878 ${y - 1}h3v2h-3z" fill="#00ff00"/>`;
}
t += '<path d="M889 270.500h6v2h-6zM889 471.500h6v2h-6z" fill="none" stroke="#00ff00"/>';
t += '<path d="M903.500 271v203.500M910.500 271v203.500M897 271.500h14M897 473.500h14M872.500 475v14M879.500 475v8M888.500 475v8M891.500 475v14M871 481.500h21M871 487.500h21" fill="none" stroke="#0606d0"/>';
t += '<path d="M911 271.500h5M911 474.500h5" stroke="#b8a010"/><g fill="none" stroke="#0fae1c" stroke-width="1.300"><circle cx="919.500" cy="271.500" r="3.200"/><circle cx="919.500" cy="474.500" r="3.200"/></g>';
t += '<path d="M901 372.500v3M908 373v3M874 478.500h3M881 478.500h3M892 478.500h3M879 485h4" stroke="#8c108c" stroke-width="2"/>';
t += '<path d="M868.500 313l-.8 12.500h-2M867.500 418v5.500h-2M867.500 424l1 6.500" fill="none" stroke="#12b81c"/>';
t += '<path d="M936 358.500v27" stroke="#12b8bc" stroke-width="2"/><path d="M931.500 363v18M933.500 363v18" stroke="#0c9a14" stroke-width="1.500" stroke-dasharray="2 1"/>';
document.getElementById('truss').innerHTML = t;
</script>
</body>
</html>
